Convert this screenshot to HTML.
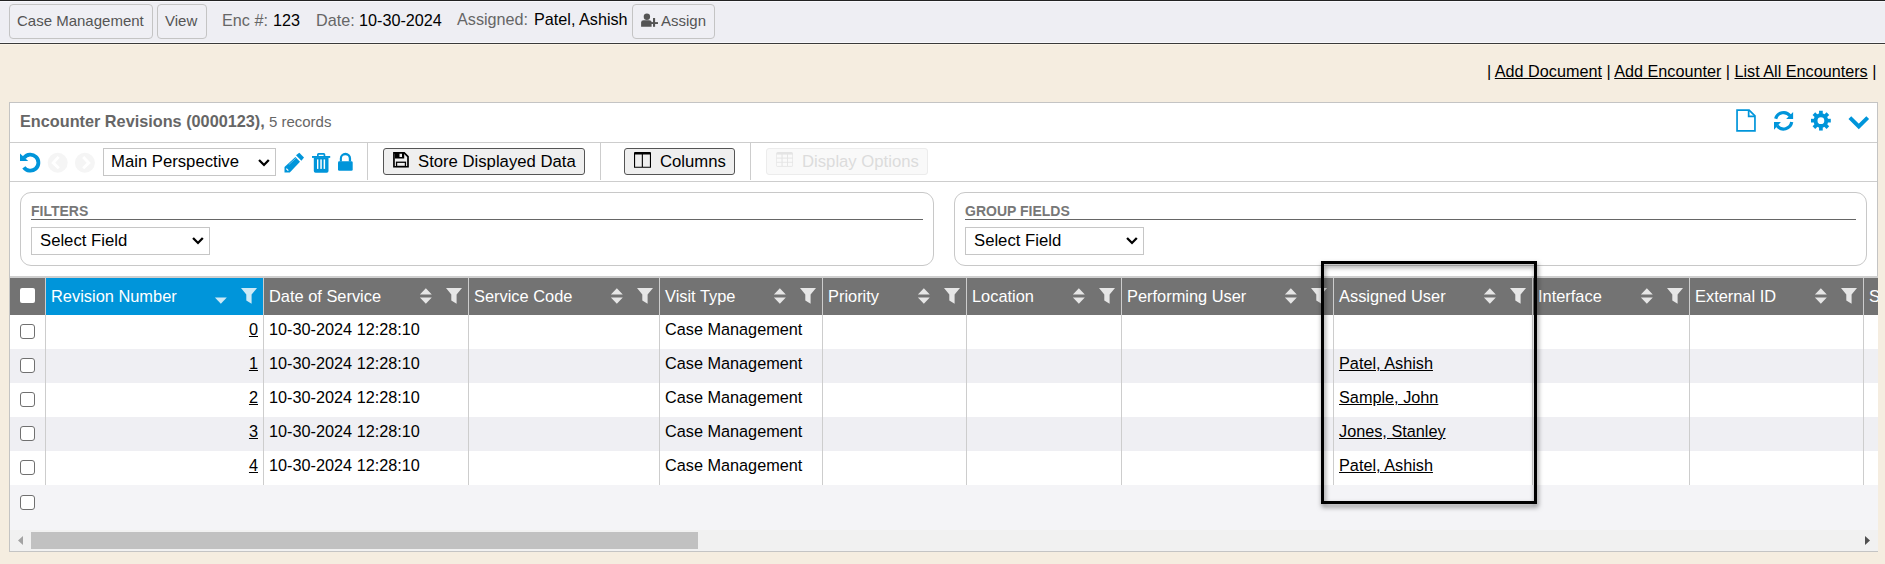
<!DOCTYPE html>
<html><head><meta charset="utf-8"><style>
*{box-sizing:border-box;margin:0;padding:0}
html,body{width:1885px;height:564px;overflow:hidden;background:#f5ede0;font-family:"Liberation Sans",sans-serif;color:#000}
.a{position:absolute}
.t{position:absolute;white-space:nowrap;line-height:20px;font-size:16.2px}
svg{position:absolute;overflow:visible}
.lbl{color:#666}
.hl{position:absolute;height:1px;background:#cdcdcd}
.vl{position:absolute;width:1px;background:#cdcdcd}
.tbtn{position:absolute;top:4px;height:35px;border:1px solid #c4c4c4;border-radius:4px;background:#efeff4}
.btn{position:absolute;top:148px;height:27px;border:1px solid #555;border-radius:3px;background:#efefef}
.sel{position:absolute;height:28px;border:1px solid #c6c6c6;background:#fff}
.fs{position:absolute;top:192px;height:74px;border:1px solid #c8c8c8;border-radius:11px;background:#fff}
.ht{position:absolute;top:286px;line-height:20px;font-size:16.4px;color:#fff;white-space:nowrap}
.cb{position:absolute;width:15px;height:15px;border:1.5px solid #707070;border-radius:3px;background:#fff}
.d{position:absolute;line-height:20px;font-size:16.25px;white-space:nowrap}
u{text-decoration:underline}
</style></head><body>
<div class="a" style="left:0;top:0;width:1885px;height:44px;background:#eeeef3"></div>
<div class="a" style="left:0;top:0;width:1885px;height:1px;background:#222"></div>
<div class="a" style="left:0;top:1px;width:1885px;height:1px;background:#f8f8fc"></div>
<div class="a" style="left:0;top:42px;width:1885px;height:1px;background:#f8f8fc"></div>
<div class="a" style="left:0;top:43px;width:1885px;height:1px;background:#3a3a3a"></div>
<div class="a" style="left:0;top:44px;width:1885px;height:1px;background:#fcf5e8"></div>
<div class="tbtn" style="left:9px;width:144px"></div>
<div class="t" style="left:17px;top:11px;font-size:15px;color:#555">Case Management</div>
<div class="tbtn" style="left:157px;width:50px"></div>
<div class="t" style="left:165px;top:11px;font-size:15px;color:#555">View</div>
<div class="t" style="left:222px;top:10px;color:#666">Enc #:</div>
<div class="t" style="left:273px;top:10px;">123</div>
<div class="t" style="left:316px;top:10px;color:#666">Date:</div>
<div class="t" style="left:359px;top:10px;">10-30-2024</div>
<div class="t" style="left:457px;top:9px;color:#666">Assigned:</div>
<div class="t" style="left:534px;top:9px;">Patel, Ashish</div>
<div class="tbtn" style="left:632px;width:83px"></div>
<svg style="left:636px;top:10px" width="28" height="22" viewBox="0 0 28 22" ><g fill="#555"><circle cx="10.9" cy="6.8" r="3.2"/><path d="M5.1 16.8 V12.6 Q5.1 10.2 7.5 10.2 H13 Q15.6 10.2 15.6 12.6 V16.8 Z"/><rect x="13.3" y="12.1" width="8.7" height="1.9"/><rect x="17" y="8" width="2.1" height="8.8"/></g></svg>
<div class="t" style="left:661px;top:11px;font-size:15px;color:#555">Assign</div>
<div class="t" style="left:1487px;top:61px;">| <u>Add Document</u> | <u>Add Encounter</u> | <u>List All Encounters</u> |</div>
<div class="a" style="left:9px;top:102px;width:1869px;height:450px;background:#fff;border:1px solid #c4c4c4"></div>
<div class="t" style="left:20px;top:111px;font-weight:bold;color:#666;font-size:16.25px">Encounter Revisions (0000123),<span style="font-weight:normal;font-size:15px"> 5 records</span></div>
<svg style="left:1732px;top:106px" width="66" height="28" viewBox="0 0 66 28" ><g fill="none" stroke="#0095da" stroke-width="1.7"><path d="M5.05 4.05 H17.1 L22.95 9.9 V24.95 H5.05 Z"/><path d="M16.65 4.05 V10.45 H22.95"/></g><g fill="none" stroke="#0095da" stroke-width="3.2"><path d="M43.67 12.72 A8.2 8.2 0 0 1 58.06 9.75"/><path d="M59.70 16.08 A8.2 8.2 0 0 1 45.14 19.85"/></g><g fill="#0095da"><path d="M54.1 12.9 H61.1 V6 Z"/><path d="M42 16.1 H48.9 L42 23.8 Z"/></g></svg>
<svg style="left:1806px;top:106px" width="68" height="28" viewBox="0 0 68 28" ><g stroke="#0095da" stroke-width="3.7"><line x1="14.9" y1="14.65" x2="24.80" y2="14.65"/><line x1="14.9" y1="14.65" x2="21.90" y2="21.65"/><line x1="14.9" y1="14.65" x2="14.90" y2="24.55"/><line x1="14.9" y1="14.65" x2="7.90" y2="21.65"/><line x1="14.9" y1="14.65" x2="5.00" y2="14.65"/><line x1="14.9" y1="14.65" x2="7.90" y2="7.65"/><line x1="14.9" y1="14.65" x2="14.90" y2="4.75"/><line x1="14.9" y1="14.65" x2="21.90" y2="7.65"/></g><circle cx="14.9" cy="14.65" r="7.3" fill="#0095da"/><circle cx="14.9" cy="14.65" r="3.4" fill="#fff"/><path d="M43.85 11.6 L52.78 20.5 L61.7 11.6" fill="none" stroke="#0095da" stroke-width="3.9"/></svg>
<div class="hl" style="left:10px;top:142px;width:1867px"></div>
<div class="hl" style="left:10px;top:181px;width:1867px"></div>
<svg style="left:16px;top:149px" width="28" height="28" viewBox="0 0 28 28" ><path d="M8.10 8.77 A8 8 0 1 1 7.85 18.29" fill="none" stroke="#0095da" stroke-width="3.8"/><path d="M4 4.5 L4 12.1 L12.2 12.1 Z" fill="#0095da"/></svg>
<svg style="left:47px;top:152px" width="50" height="22" viewBox="0 0 50 22" ><circle cx="10.7" cy="10.8" r="10" fill="#f5f5f5"/><path d="M11.6 4.9 L6.2 10.9 L11.8 16.3" fill="none" stroke="#fff" stroke-width="2.9"/><circle cx="37.9" cy="10.8" r="10" fill="#f5f5f5"/><path d="M36.2 4.9 L41.8 10.9 L36.2 16.3" fill="none" stroke="#fff" stroke-width="2.9"/></svg>
<div class="sel" style="left:103px;top:148px;width:173px"></div>
<div class="t" style="left:111px;top:152px;font-size:16.7px">Main Perspective</div>
<svg style="left:250px;top:152px" width="30" height="20" viewBox="0 0 30 20" ><path d="M9.04 7.98 L14 12.94 L18.8 7.98" fill="none" stroke="#000" stroke-width="2.3"/></svg>
<svg style="left:282px;top:150px" width="76" height="26" viewBox="0 0 76 26" ><g fill="#0095da"><path d="M2.5 22.6 L2.5 17 L13.4 6.9 L18 11.75 L7.8 22.6 Z"/><path d="M14 5.3 L17.3 2.8 L22 7.4 L19.4 10.8 Z"/><rect x="30" y="6" width="18.2" height="1.9"/><path d="M35 6 V4.5 Q35 3 36.5 3 H41.8 Q43.3 3 43.3 4.5 V6 H41.6 V4.7 H36.7 V6 Z"/><path d="M31.8 7.5 H46.5 V21 Q46.5 22.8 44.7 22.8 H33.6 Q31.8 22.8 31.8 21 Z"/><path d="M57.8 11.5 V8.5 A5.65 5.65 0 0 1 69.1 8.5 V11.5 H66.8 V8.6 A3.45 3.45 0 0 0 59.9 8.6 V11.5 Z"/><rect x="56" y="11.3" width="14.7" height="9.4" rx="1.3"/></g><g fill="#fff"><rect x="35" y="9.4" width="1.4" height="9.5"/><rect x="38.3" y="9.4" width="1.5" height="9.5"/><rect x="41.6" y="9.4" width="1.5" height="9.5"/></g><path d="M6.8 14.6 L13.9 8.2" stroke="#fff" stroke-width="0.5" opacity="0.8"/><path d="M4.3 18.6 L6.3 20.6" stroke="#fff" stroke-width="1.2"/></svg>
<div class="vl" style="left:367px;top:143px;height:37px"></div>
<div class="btn" style="left:383px;width:202px"></div>
<svg style="left:388px;top:148px" width="26" height="24" viewBox="0 0 26 24" ><path d="M5.95 4.85 H16.2 L20 8.6 V18.75 H5.95 Z" fill="none" stroke="#000" stroke-width="1.7"/><path d="M7 4 H16.2 V10.4 H7 Z M11.5 5.1 V9.1 H14 V5.1 Z" fill="#000" fill-rule="evenodd"/><rect x="8.55" y="14.25" width="8.9" height="4.2" fill="none" stroke="#000" stroke-width="1.3"/></svg>
<div class="t" style="left:418px;top:152px;font-size:16.7px">Store Displayed Data</div>
<div class="vl" style="left:600px;top:143px;height:37px"></div>
<div class="btn" style="left:624px;width:111px"></div>
<svg style="left:628px;top:148px" width="28" height="24" viewBox="0 0 28 24" ><path d="M6.55 5.5 H22.45 V19.25 H6.55 Z M14.35 5.5 V19.25" fill="none" stroke="#000" stroke-width="1.1"/><rect x="6" y="4" width="17" height="2.6" rx="1" fill="#000"/></svg>
<div class="t" style="left:660px;top:152px;font-size:16.7px">Columns</div>
<div class="vl" style="left:750px;top:143px;height:37px"></div>
<div class="btn" style="left:766px;width:162px;border-color:#ececec;background:#f9f9f9"></div>
<svg style="left:770px;top:148px" width="28" height="24" viewBox="0 0 28 24" ><rect x="6.2" y="4" width="16.8" height="14.7" rx="1.5" fill="#e4e4e4"/><rect x="6.8" y="6.6" width="4.7" height="3" fill="#fafafa"/><rect x="6.8" y="10.6" width="4.7" height="3.2" fill="#fafafa"/><rect x="6.8" y="14.7" width="4.7" height="3.2" fill="#fafafa"/><rect x="12.6" y="6.6" width="4.4" height="3" fill="#fafafa"/><rect x="12.6" y="10.6" width="4.4" height="3.2" fill="#fafafa"/><rect x="12.6" y="14.7" width="4.4" height="3.2" fill="#fafafa"/><rect x="17.9" y="6.6" width="4.4" height="3" fill="#fafafa"/><rect x="17.9" y="10.6" width="4.4" height="3.2" fill="#fafafa"/><rect x="17.9" y="14.7" width="4.4" height="3.2" fill="#fafafa"/></svg>
<div class="t" style="left:802px;top:152px;font-size:16.7px;color:#dcdcdc">Display Options</div>
<div class="fs" style="left:20px;width:914px"></div>
<div class="t" style="left:31px;top:201px;font-size:14px;font-weight:bold;color:#777">FILTERS</div>
<div class="hl" style="left:31px;top:219px;width:892px;background:#666"></div>
<div class="sel" style="left:31px;top:227px;width:179px"></div>
<div class="t" style="left:40px;top:231px;font-size:16.7px">Select Field</div>
<svg style="left:184px;top:230px" width="30" height="20" viewBox="0 0 30 20" ><path d="M9.04 7.98 L14 12.94 L18.8 7.98" fill="none" stroke="#000" stroke-width="2.3"/></svg>
<div class="fs" style="left:954px;width:913px"></div>
<div class="t" style="left:965px;top:201px;font-size:14px;font-weight:bold;color:#777">GROUP FIELDS</div>
<div class="hl" style="left:965px;top:219px;width:891px;background:#666"></div>
<div class="sel" style="left:965px;top:227px;width:179px"></div>
<div class="t" style="left:974px;top:231px;font-size:16.7px">Select Field</div>
<svg style="left:1118px;top:230px" width="30" height="20" viewBox="0 0 30 20" ><path d="M9.04 7.98 L14 12.94 L18.8 7.98" fill="none" stroke="#000" stroke-width="2.3"/></svg>
<div class="a" style="left:10px;top:276px;width:1868px;height:2px;background:#cfcfcf"></div>
<div class="a" style="left:10px;top:278px;width:1868px;height:37px;background:#737373"></div>
<div class="a" style="left:46px;top:278px;width:217px;height:37px;background:#0095da"></div>
<div class="a" style="left:10px;top:315px;width:1868px;height:34px;background:#fff"></div>
<div class="a" style="left:10px;top:349px;width:1868px;height:34px;background:#efeff3"></div>
<div class="a" style="left:10px;top:383px;width:1868px;height:34px;background:#fff"></div>
<div class="a" style="left:10px;top:417px;width:1868px;height:34px;background:#efeff3"></div>
<div class="a" style="left:10px;top:451px;width:1868px;height:34px;background:#fff"></div>
<div class="a" style="left:10px;top:485px;width:1868px;height:45px;background:#f4f4f7"></div>
<div class="vl" style="left:45px;top:278px;height:207px;background:#cdcdcd"></div>
<div class="vl" style="left:263px;top:278px;height:207px;background:#cdcdcd"></div>
<div class="vl" style="left:468px;top:278px;height:207px;background:#cdcdcd"></div>
<div class="vl" style="left:659px;top:278px;height:207px;background:#cdcdcd"></div>
<div class="vl" style="left:822px;top:278px;height:207px;background:#cdcdcd"></div>
<div class="vl" style="left:966px;top:278px;height:207px;background:#cdcdcd"></div>
<div class="vl" style="left:1121px;top:278px;height:207px;background:#cdcdcd"></div>
<div class="vl" style="left:1333px;top:278px;height:207px;background:#cdcdcd"></div>
<div class="vl" style="left:1532px;top:278px;height:207px;background:#cdcdcd"></div>
<div class="vl" style="left:1689px;top:278px;height:207px;background:#cdcdcd"></div>
<div class="vl" style="left:1863px;top:278px;height:207px;background:#cdcdcd"></div>
<div class="ht" style="left:51px">Revision Number</div>
<svg style="left:211px;top:284px" width="52" height="24" viewBox="0 0 52 24" ><path d="M3.9 13.4 H15.8 L9.85 19.8 Z" fill="#cde9f6"/><path d="M30 4 H46 L40.6 10.6 V19.8 L35.3 16.6 V10.6 Z" fill="#cde9f6"/></svg>
<div class="ht" style="left:269px">Date of Service</div>
<svg style="left:416px;top:284px" width="52" height="24" viewBox="0 0 52 24" ><path d="M3.9 10.6 L9.85 4.3 L15.8 10.6 Z M3.9 13.5 H15.8 L9.85 19.8 Z" fill="#e6e6e6"/><path d="M30 4 H46 L40.6 10.6 V19.8 L35.3 16.6 V10.6 Z" fill="#e6e6e6"/></svg>
<div class="ht" style="left:474px">Service Code</div>
<svg style="left:607px;top:284px" width="52" height="24" viewBox="0 0 52 24" ><path d="M3.9 10.6 L9.85 4.3 L15.8 10.6 Z M3.9 13.5 H15.8 L9.85 19.8 Z" fill="#e6e6e6"/><path d="M30 4 H46 L40.6 10.6 V19.8 L35.3 16.6 V10.6 Z" fill="#e6e6e6"/></svg>
<div class="ht" style="left:665px">Visit Type</div>
<svg style="left:770px;top:284px" width="52" height="24" viewBox="0 0 52 24" ><path d="M3.9 10.6 L9.85 4.3 L15.8 10.6 Z M3.9 13.5 H15.8 L9.85 19.8 Z" fill="#e6e6e6"/><path d="M30 4 H46 L40.6 10.6 V19.8 L35.3 16.6 V10.6 Z" fill="#e6e6e6"/></svg>
<div class="ht" style="left:828px">Priority</div>
<svg style="left:914px;top:284px" width="52" height="24" viewBox="0 0 52 24" ><path d="M3.9 10.6 L9.85 4.3 L15.8 10.6 Z M3.9 13.5 H15.8 L9.85 19.8 Z" fill="#e6e6e6"/><path d="M30 4 H46 L40.6 10.6 V19.8 L35.3 16.6 V10.6 Z" fill="#e6e6e6"/></svg>
<div class="ht" style="left:972px">Location</div>
<svg style="left:1069px;top:284px" width="52" height="24" viewBox="0 0 52 24" ><path d="M3.9 10.6 L9.85 4.3 L15.8 10.6 Z M3.9 13.5 H15.8 L9.85 19.8 Z" fill="#e6e6e6"/><path d="M30 4 H46 L40.6 10.6 V19.8 L35.3 16.6 V10.6 Z" fill="#e6e6e6"/></svg>
<div class="ht" style="left:1127px">Performing User</div>
<svg style="left:1281px;top:284px" width="52" height="24" viewBox="0 0 52 24" ><path d="M3.9 10.6 L9.85 4.3 L15.8 10.6 Z M3.9 13.5 H15.8 L9.85 19.8 Z" fill="#e6e6e6"/><path d="M30 4 H46 L40.6 10.6 V19.8 L35.3 16.6 V10.6 Z" fill="#e6e6e6"/></svg>
<div class="ht" style="left:1339px">Assigned User</div>
<svg style="left:1480px;top:284px" width="52" height="24" viewBox="0 0 52 24" ><path d="M3.9 10.6 L9.85 4.3 L15.8 10.6 Z M3.9 13.5 H15.8 L9.85 19.8 Z" fill="#e6e6e6"/><path d="M30 4 H46 L40.6 10.6 V19.8 L35.3 16.6 V10.6 Z" fill="#e6e6e6"/></svg>
<div class="ht" style="left:1538px">Interface</div>
<svg style="left:1637px;top:284px" width="52" height="24" viewBox="0 0 52 24" ><path d="M3.9 10.6 L9.85 4.3 L15.8 10.6 Z M3.9 13.5 H15.8 L9.85 19.8 Z" fill="#e6e6e6"/><path d="M30 4 H46 L40.6 10.6 V19.8 L35.3 16.6 V10.6 Z" fill="#e6e6e6"/></svg>
<div class="ht" style="left:1695px">External ID</div>
<svg style="left:1811px;top:284px" width="52" height="24" viewBox="0 0 52 24" ><path d="M3.9 10.6 L9.85 4.3 L15.8 10.6 Z M3.9 13.5 H15.8 L9.85 19.8 Z" fill="#e6e6e6"/><path d="M30 4 H46 L40.6 10.6 V19.8 L35.3 16.6 V10.6 Z" fill="#e6e6e6"/></svg>
<div class="ht" style="left:1869px">S</div>
<div class="a" style="left:20px;top:288px;width:15px;height:15px;background:#fff;border-radius:2px"></div>
<div class="cb" style="left:20px;top:324px"></div>
<div class="d" style="left:200px;width:58px;text-align:right;top:319px"><u>0</u></div>
<div class="d" style="left:269px;top:319px">10-30-2024 12:28:10</div>
<div class="d" style="left:665px;top:319px">Case Management</div>
<div class="cb" style="left:20px;top:358px"></div>
<div class="d" style="left:200px;width:58px;text-align:right;top:353px"><u>1</u></div>
<div class="d" style="left:269px;top:353px">10-30-2024 12:28:10</div>
<div class="d" style="left:665px;top:353px">Case Management</div>
<div class="d" style="left:1339px;top:353px"><u>Patel, Ashish</u></div>
<div class="cb" style="left:20px;top:392px"></div>
<div class="d" style="left:200px;width:58px;text-align:right;top:387px"><u>2</u></div>
<div class="d" style="left:269px;top:387px">10-30-2024 12:28:10</div>
<div class="d" style="left:665px;top:387px">Case Management</div>
<div class="d" style="left:1339px;top:387px"><u>Sample, John</u></div>
<div class="cb" style="left:20px;top:426px"></div>
<div class="d" style="left:200px;width:58px;text-align:right;top:421px"><u>3</u></div>
<div class="d" style="left:269px;top:421px">10-30-2024 12:28:10</div>
<div class="d" style="left:665px;top:421px">Case Management</div>
<div class="d" style="left:1339px;top:421px"><u>Jones, Stanley</u></div>
<div class="cb" style="left:20px;top:460px"></div>
<div class="d" style="left:200px;width:58px;text-align:right;top:455px"><u>4</u></div>
<div class="d" style="left:269px;top:455px">10-30-2024 12:28:10</div>
<div class="d" style="left:665px;top:455px">Case Management</div>
<div class="d" style="left:1339px;top:455px"><u>Patel, Ashish</u></div>
<div class="cb" style="left:20px;top:495px"></div>
<div class="a" style="left:10px;top:530px;width:1868px;height:21px;background:#f1f1f1"></div>
<div class="a" style="left:31px;top:532px;width:667px;height:17px;background:#c1c1c1"></div>
<svg style="left:10px;top:530px" width="20" height="21" viewBox="0 0 20 21" ><path d="M13 6 V15 L8 10.5 Z" fill="#a3a3a3"/></svg>
<svg style="left:1857px;top:530px" width="20" height="21" viewBox="0 0 20 21" ><path d="M8 6 V15 L13 10.5 Z" fill="#505050"/></svg>
<div class="a" style="left:9px;top:551px;width:1869px;height:1px;background:#c4c4c4"></div>
<div class="a" style="left:1878px;top:102px;width:7px;height:462px;background:#f5ede0"></div>
<div class="a" style="left:1321px;top:261px;width:216px;height:243px;border:3px solid #000;filter:drop-shadow(1px 3px 2.5px rgba(0,0,0,.5))"></div>
</body></html>
